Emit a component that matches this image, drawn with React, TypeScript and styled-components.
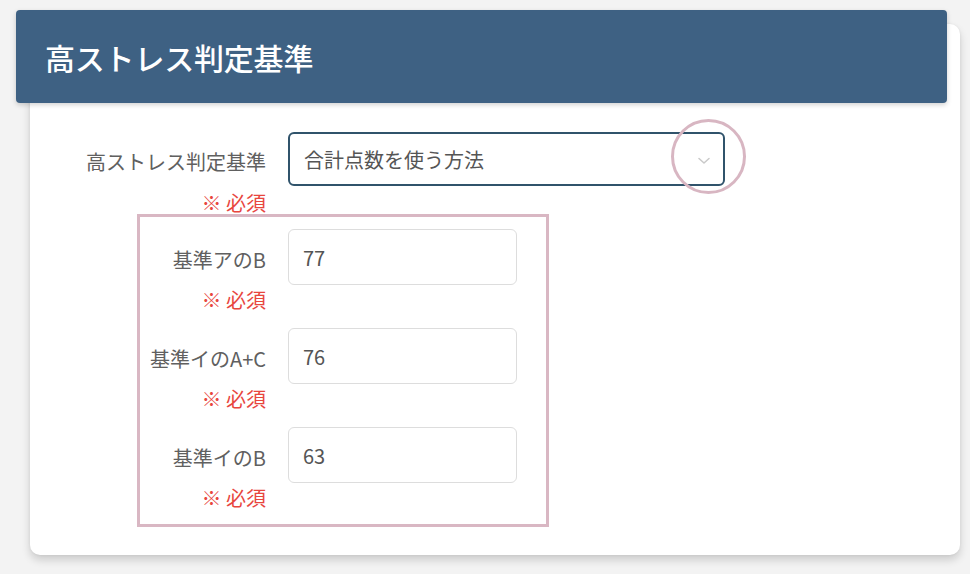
import React from "react";
import styled, { createGlobalStyle } from "styled-components";

const GlobalStyle = createGlobalStyle`
  html, body { margin: 0; padding: 0; background: #f3f3f3; }
  body { font-family: "Noto Sans CJK JP", "Noto Sans", sans-serif; }
  * { box-sizing: border-box; }
`;

const Page = styled.div`
  width: 970px;
  height: 574px;
  padding: 24px 0 0 30px;
  background: #f3f3f3;
  overflow: hidden;
`;

const Card = styled.section`
  display: flow-root;
  width: 930px;
  height: 531px;
  background: #ffffff;
  border-radius: 10px;
  box-shadow: 0 5px 9px rgba(0, 0, 0, 0.16), 0 0 3px rgba(0, 0, 0, 0.06);
`;

const Header = styled.header`
  margin: -14px 0 0 -14px;
  width: 931px;
  height: 93px;
  display: flex;
  align-items: center;
  padding-left: 29px;
  background: #3e6183;
  border-radius: 4px;
  box-shadow: 0 2px 5px rgba(0, 0, 0, 0.18);
`;

const Title = styled.h1`
  margin: 0;
  font-size: 30px;
  font-weight: 500;
  color: #ffffff;
  line-height: 1;
  letter-spacing: -0.2px;
`;

const Form = styled.div`
  padding-top: 29px;
`;

const Row = styled.div<{ $label: number; $field: number }>`
  display: grid;
  grid-template-columns: ${(p) => p.$label}px ${(p) => p.$field}px;
  column-gap: 22px;
  height: 82px;
`;

const LabelCol = styled.div<{ $h: number }>`
  display: grid;
  grid-template-rows: ${(p) => p.$h}px 22px;
  row-gap: ${(p) => 60 - p.$h}px;
  text-align: right;
`;

const Label = styled.label`
  display: flex;
  align-items: center;
  justify-content: flex-end;
  padding-top: 5px;
  font-size: 20px;
  color: #606060;
  white-space: nowrap;
`;

const Required = styled.div`
  font-size: 20px;
  line-height: 22px;
  color: #e8463e;
  white-space: nowrap;
`;

const SelectBox = styled.div`
  position: relative;
  height: 54px;
  display: flex;
  align-items: center;
  justify-content: space-between;
  padding: 0 13px 0 14px;
  border: 2px solid #30536b;
  border-radius: 6px;
  font-size: 20px;
  color: #555555;
`;

const Highlight = styled.span`
  position: absolute;
  left: 381px;
  top: -15px;
  width: 75px;
  height: 75px;
  border: 3px solid #d8b6c2;
  border-radius: 50%;
  pointer-events: none;
`;

const Chevron = styled.svg`
  width: 12px;
  height: 8px;
  margin-top: 3px;
`;

const InputBox = styled.div`
  height: 56px;
  display: flex;
  align-items: center;
  padding-left: 14px;
  border: 1.5px solid #dddddd;
  border-radius: 6px;
  font-size: 20px;
  color: #555555;
`;

const Group = styled.div`
  margin-left: 107px;
  width: 412px;
  border: 3px solid #d9b7c3;
  padding: 12px 0 15px 0;
  display: flex;
  flex-direction: column;
  gap: 17px;
`;

const criteria = [
  { label: "基準アのB", value: "77" },
  { label: "基準イのA+C", value: "76" },
  { label: "基準イのB", value: "63" },
];

export default function App() {
  return (
    <>
      <GlobalStyle />
      <Page>
        <Card>
          <Header>
            <Title>高ストレス判定基準</Title>
          </Header>
          <Form>
            <Row $label={236} $field={437}>
              <LabelCol $h={54}>
                <Label>高ストレス判定基準</Label>
                <Required>※ 必須</Required>
              </LabelCol>
              <SelectBox>
                <span>合計点数を使う方法</span>
                <Chevron viewBox="0 0 12 8" fill="none">
                  <path d="M1 1.5 L6 6 L11 1.5" stroke="#c9c9c9" strokeWidth="1.5" strokeLinecap="round" strokeLinejoin="round" />
                </Chevron>
                <Highlight />
              </SelectBox>
            </Row>
            <Group>
              {criteria.map((c) => (
                <Row key={c.label} $label={126} $field={229}>
                  <LabelCol $h={56}>
                    <Label>{c.label}</Label>
                    <Required>※ 必須</Required>
                  </LabelCol>
                  <InputBox>{c.value}</InputBox>
                </Row>
              ))}
            </Group>
          </Form>
        </Card>
      </Page>
    </>
  );
}
